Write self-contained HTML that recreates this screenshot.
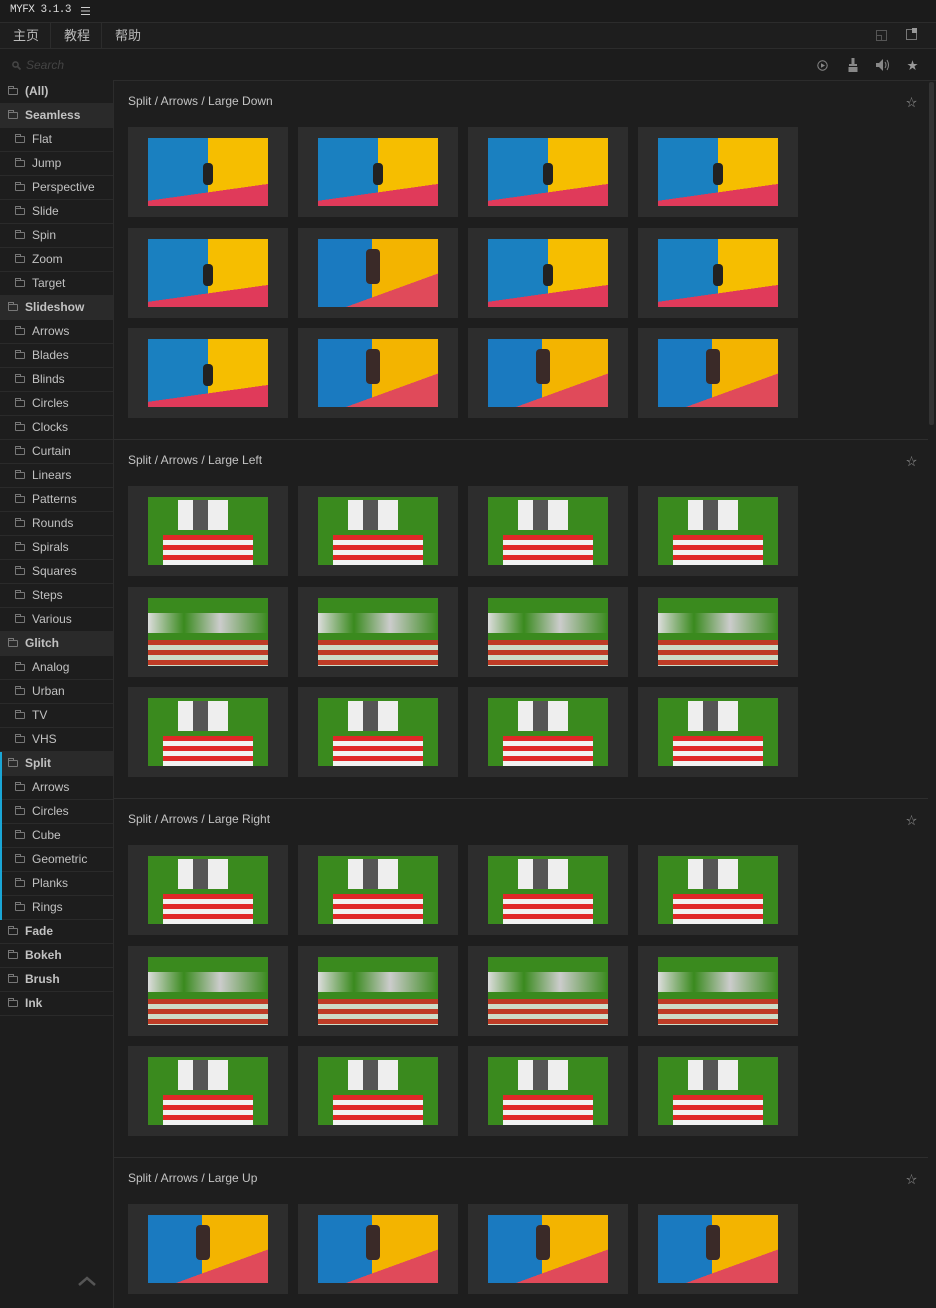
<!DOCTYPE html>
<html><head><meta charset="utf-8">
<style>
*{box-sizing:border-box;margin:0;padding:0}
html{background:#1e1e1e;height:1308px;overflow:hidden}
body{width:936px;height:1308px;background:#1e1e1e;font-family:"Liberation Sans","Noto Sans CJK SC",sans-serif;color:#c8c8c8;overflow:hidden;position:relative;font-size:12px}
.top{position:absolute;left:0;top:0;width:936px;height:23px;background:#1b1b1b;border-bottom:1px solid #2c2c2c}
.top .t{position:absolute;left:10px;top:4px;font-family:"Liberation Mono",monospace;font-size:11px;letter-spacing:-0.5px;color:#ddd}
.tabs{position:absolute;left:0;top:23px;width:936px;height:26px;background:#1e1e1e;border-bottom:1px solid #2c2c2c}
.tab{position:absolute;top:0;height:25px;line-height:25px;font-size:13px;color:#bbb;border-right:1px solid #2c2c2c}
.search{position:absolute;left:0;top:49px;width:936px;height:32px;background:#1c1c1c;border-bottom:1px solid #2c2c2c}
.search .ph{position:absolute;left:26px;top:9px;font-style:italic;color:#444;font-size:12px}
.side{position:absolute;left:0;top:80px;width:114px;height:1228px;border-right:1px solid #2c2c2c;background:#1d1d1d}
.row{height:24px;line-height:23px;border-bottom:1px solid #2a2a2a;position:relative;font-size:12px;color:#c2c2c2}
.row.c{font-weight:bold;padding-left:25px}
.row.s{padding-left:32px}
.row.sel{background:#2a2a2a}
.row i{position:absolute;top:8px;width:10px;height:7px;border:1px solid #777;border-radius:1px}
.row.c i{left:8px}.row.s i{left:15px}
.row i:before{content:"";position:absolute;left:-1px;top:-3px;width:4px;height:2px;border:1px solid #777;border-bottom:none}
.bar{position:absolute;left:0;top:752px;width:2px;height:168px;background:#1aa6d6}
.sec{position:absolute;left:114px;width:814px;height:359px}
.line{position:absolute;left:114px;width:814px;height:1px;background:#2e2e2e}
.sec .h{position:absolute;left:14px;top:6px;font-size:12px;color:#c4c4c4}
.sec .star{position:absolute;right:11px;top:6px;color:#888;font-size:11px}
.cell{position:absolute;width:160px;height:90px;background:#2d2d2d}
.th{position:absolute;left:20px;top:11px;width:120px;height:68px;overflow:hidden}
.a{background:linear-gradient(172deg,transparent 74%,#e03a5a 74%),linear-gradient(to right,#1a80c0 50%,#f6be00 50%)}
.a:after{content:"";position:absolute;left:55px;top:25px;width:10px;height:22px;background:#222;border-radius:4px}
.a2{background:linear-gradient(160deg,transparent 70%,#e04a5a 70%),linear-gradient(to right,#1a7ac0 45%,#f3b400 45%)}
.a2:after{content:"";position:absolute;left:48px;top:10px;width:14px;height:35px;background:#3a2a28;border-radius:4px}
.g{background:#3a8a1e}
.g:before{content:"";position:absolute;left:30px;top:3px;width:50px;height:30px;background:linear-gradient(to right,#eee 30%,#555 30% 60%,#eee 60%)}
.g:after{content:"";position:absolute;left:15px;top:38px;width:90px;height:30px;background:repeating-linear-gradient(to bottom,#e02828 0 5px,#f2f2f2 5px 10px)}
.g2{background:#3a8a1e}
.g2:before{content:"";position:absolute;left:0;top:15px;width:120px;height:20px;background:linear-gradient(to right,#ddd,#3a8a1e 30%,#ccc 60%,#3a8a1e)}
.g2:after{content:"";position:absolute;left:0;top:42px;width:120px;height:26px;background:repeating-linear-gradient(to bottom,#e02828 0 5px,#f2f2f2 5px 10px);opacity:.8}
.scroll{position:absolute;left:929px;top:82px;width:5px;height:343px;background:#333;border-radius:2px}
</style></head><body>
<div class="top"><span class="t">MYFX 3.1.3</span><svg style="position:absolute;left:81px;top:7px" width="9" height="8"><path d="M0 0.5H9M0 4H9M0 7.5H9" stroke="#ccc"/></svg></div>
<div class="tabs">
<div class="tab" style="left:0;width:51px;padding-left:13px">主页</div>
<div class="tab" style="left:51px;width:51px;padding-left:13px">教程</div>
<div class="tab" style="left:102px;width:50px;padding-left:13px;border-right:none">帮助</div>
<svg style="position:absolute;left:876px;top:7px" width="11" height="11"><rect x="0.5" y="0.5" width="10" height="10" fill="none" stroke="#555"/><rect x="0.5" y="5.5" width="5" height="5" fill="none" stroke="#555"/></svg>
<svg style="position:absolute;left:906px;top:5px" width="12" height="12"><rect x="0.5" y="1.5" width="10" height="10" fill="none" stroke="#777"/><rect x="6" y="0" width="5" height="5" fill="#999"/></svg>
</div>
<div class="search"><svg style="position:absolute;left:12px;top:12px" width="9" height="9"><circle cx="3.5" cy="3.5" r="2.6" fill="none" stroke="#444" stroke-width="1.6"/><path d="M5.5 5.5L8.5 8.5" stroke="#444" stroke-width="1.8"/></svg><span class="ph">Search</span>
<svg style="position:absolute;left:817px;top:11px" width="11" height="11"><circle cx="5.5" cy="5.5" r="4.7" fill="none" stroke="#888"/><path d="M4 3.3L8 5.5L4 7.7Z" fill="#888"/></svg>
<svg style="position:absolute;left:848px;top:9px" width="10" height="14"><rect x="3.5" y="0" width="3" height="6" fill="#888"/><rect x="1" y="6" width="8" height="2" fill="#888"/><path d="M0.5 9H9.5V14H0.5Z" fill="#888"/></svg>
<svg style="position:absolute;left:876px;top:10px" width="14" height="12"><path d="M0 4H3L7 0V12L3 8H0Z" fill="#888"/><path d="M9 3Q11 6 9 9M11 1Q14 6 11 11" stroke="#888" fill="none"/></svg>
<span style="position:absolute;left:907px;top:8px;color:#999;font-size:11px">★</span>
</div>
<div class="side">
<div class="row c"><i></i>(All)</div>
<div class="row c sel"><i></i>Seamless</div>
<div class="row s"><i></i>Flat</div>
<div class="row s"><i></i>Jump</div>
<div class="row s"><i></i>Perspective</div>
<div class="row s"><i></i>Slide</div>
<div class="row s"><i></i>Spin</div>
<div class="row s"><i></i>Zoom</div>
<div class="row s"><i></i>Target</div>
<div class="row c sel"><i></i>Slideshow</div>
<div class="row s"><i></i>Arrows</div>
<div class="row s"><i></i>Blades</div>
<div class="row s"><i></i>Blinds</div>
<div class="row s"><i></i>Circles</div>
<div class="row s"><i></i>Clocks</div>
<div class="row s"><i></i>Curtain</div>
<div class="row s"><i></i>Linears</div>
<div class="row s"><i></i>Patterns</div>
<div class="row s"><i></i>Rounds</div>
<div class="row s"><i></i>Spirals</div>
<div class="row s"><i></i>Squares</div>
<div class="row s"><i></i>Steps</div>
<div class="row s"><i></i>Various</div>
<div class="row c sel"><i></i>Glitch</div>
<div class="row s"><i></i>Analog</div>
<div class="row s"><i></i>Urban</div>
<div class="row s"><i></i>TV</div>
<div class="row s"><i></i>VHS</div>
<div class="row c sel"><i></i>Split</div>
<div class="row s"><i></i>Arrows</div>
<div class="row s"><i></i>Circles</div>
<div class="row s"><i></i>Cube</div>
<div class="row s"><i></i>Geometric</div>
<div class="row s"><i></i>Planks</div>
<div class="row s"><i></i>Rings</div>
<div class="row c"><i></i>Fade</div>
<div class="row c"><i></i>Bokeh</div>
<div class="row c"><i></i>Brush</div>
<div class="row c"><i></i>Ink</div>
<svg style="position:absolute;left:78px;top:1196px" width="18" height="10"><path d="M1 9L9 2L17 9" stroke="#555" stroke-width="2.5" fill="none"/></svg>
</div>
<div class="bar"></div>
<div class="line" style="top:439px"></div>
<div class="line" style="top:798px"></div>
<div class="line" style="top:1157px"></div>

<div class="sec" style="top:88px"><div class="h">Split / Arrows / Large Down</div><div class="star">☆</div>
<div class="cell" style="left:14px;top:39px"><div class="th a"></div></div>
<div class="cell" style="left:184px;top:39px"><div class="th a"></div></div>
<div class="cell" style="left:354px;top:39px"><div class="th a"></div></div>
<div class="cell" style="left:524px;top:39px"><div class="th a"></div></div>
<div class="cell" style="left:14px;top:140px"><div class="th a"></div></div>
<div class="cell" style="left:184px;top:140px"><div class="th a2"></div></div>
<div class="cell" style="left:354px;top:140px"><div class="th a"></div></div>
<div class="cell" style="left:524px;top:140px"><div class="th a"></div></div>
<div class="cell" style="left:14px;top:240px"><div class="th a"></div></div>
<div class="cell" style="left:184px;top:240px"><div class="th a2"></div></div>
<div class="cell" style="left:354px;top:240px"><div class="th a2"></div></div>
<div class="cell" style="left:524px;top:240px"><div class="th a2"></div></div>
</div>

<div class="sec" style="top:447px"><div class="h">Split / Arrows / Large Left</div><div class="star">☆</div>
<div class="cell" style="left:14px;top:39px"><div class="th g"></div></div>
<div class="cell" style="left:184px;top:39px"><div class="th g"></div></div>
<div class="cell" style="left:354px;top:39px"><div class="th g"></div></div>
<div class="cell" style="left:524px;top:39px"><div class="th g"></div></div>
<div class="cell" style="left:14px;top:140px"><div class="th g2"></div></div>
<div class="cell" style="left:184px;top:140px"><div class="th g2"></div></div>
<div class="cell" style="left:354px;top:140px"><div class="th g2"></div></div>
<div class="cell" style="left:524px;top:140px"><div class="th g2"></div></div>
<div class="cell" style="left:14px;top:240px"><div class="th g"></div></div>
<div class="cell" style="left:184px;top:240px"><div class="th g"></div></div>
<div class="cell" style="left:354px;top:240px"><div class="th g"></div></div>
<div class="cell" style="left:524px;top:240px"><div class="th g"></div></div>
</div>

<div class="sec" style="top:806px"><div class="h">Split / Arrows / Large Right</div><div class="star">☆</div>
<div class="cell" style="left:14px;top:39px"><div class="th g"></div></div>
<div class="cell" style="left:184px;top:39px"><div class="th g"></div></div>
<div class="cell" style="left:354px;top:39px"><div class="th g"></div></div>
<div class="cell" style="left:524px;top:39px"><div class="th g"></div></div>
<div class="cell" style="left:14px;top:140px"><div class="th g2"></div></div>
<div class="cell" style="left:184px;top:140px"><div class="th g2"></div></div>
<div class="cell" style="left:354px;top:140px"><div class="th g2"></div></div>
<div class="cell" style="left:524px;top:140px"><div class="th g2"></div></div>
<div class="cell" style="left:14px;top:240px"><div class="th g"></div></div>
<div class="cell" style="left:184px;top:240px"><div class="th g"></div></div>
<div class="cell" style="left:354px;top:240px"><div class="th g"></div></div>
<div class="cell" style="left:524px;top:240px"><div class="th g"></div></div>
</div>

<div class="sec" style="top:1165px;height:143px"><div class="h">Split / Arrows / Large Up</div><div class="star">☆</div>
<div class="cell" style="left:14px;top:39px"><div class="th a2"></div></div>
<div class="cell" style="left:184px;top:39px"><div class="th a2"></div></div>
<div class="cell" style="left:354px;top:39px"><div class="th a2"></div></div>
<div class="cell" style="left:524px;top:39px"><div class="th a2"></div></div>
</div>
<div class="scroll"></div>
</body></html>
